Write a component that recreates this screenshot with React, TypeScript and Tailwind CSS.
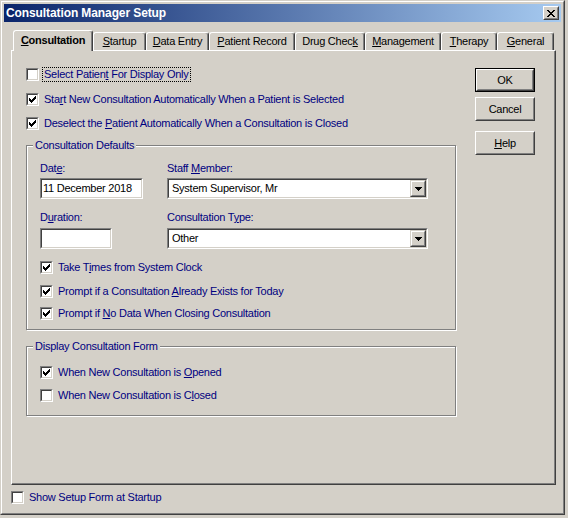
import React from "react";

const U = ({ children }: { children: React.ReactNode }) => (
  <span className="underline decoration-1 underline-offset-[1px]">{children}</span>
);

function Check({ checked }: { checked?: boolean }) {
  return (
    <span className="block w-[13px] h-[13px] shrink-0 border border-t-[#808080] border-l-[#808080] border-b-white border-r-white">
      <span className="block w-[11px] h-[11px] border border-t-[#404040] border-l-[#404040] border-b-[#d4d0c8] border-r-[#d4d0c8] bg-white">
        {checked && (
          <svg width="9" height="9" viewBox="0 0 9 9" shapeRendering="crispEdges" className="block">
            <path
              d="M1 3h1v3h-1zM2 4h1v3h-1zM3 5h1v3h-1zM4 4h1v3h-1zM5 3h1v3h-1zM6 2h1v3h-1zM7 1h1v3h-1z"
              fill="#000"
            />
          </svg>
        )}
      </span>
    </span>
  );
}

function CheckRow({
  checked,
  focus,
  children,
  className = "",
}: {
  checked?: boolean;
  focus?: boolean;
  children: React.ReactNode;
  className?: string;
}) {
  return (
    <div className={`flex items-center h-[13px] ${className}`}>
      <Check checked={checked} />
      <span
        className={`ml-[3px] px-[1px] h-[15px] leading-[13px] whitespace-nowrap border border-dotted text-[#000080] ${
          focus ? "border-black" : "border-transparent"
        }`}
      >
        {children}
      </span>
    </div>
  );
}

function Sunken({ className = "", children }: { className?: string; children?: React.ReactNode }) {
  return (
    <div className={`border border-t-[#808080] border-l-[#808080] border-b-white border-r-white ${className}`}>
      <div className="h-full w-full border border-t-[#404040] border-l-[#404040] border-b-[#d4d0c8] border-r-[#d4d0c8] bg-white flex items-center overflow-hidden">
        {children}
      </div>
    </div>
  );
}

function Raised({ className = "", children }: { className?: string; children?: React.ReactNode }) {
  return (
    <div className={`border border-t-[#d4d0c8] border-l-[#d4d0c8] border-r-[#404040] border-b-[#404040] ${className}`}>
      <div className="h-full w-full border border-t-white border-l-white border-r-[#808080] border-b-[#808080] bg-[#d4d0c8] flex items-center justify-center">
        {children}
      </div>
    </div>
  );
}

function Combo({ value, className = "" }: { value: string; className?: string }) {
  return (
    <Sunken className={`w-[261px] h-[21px] ${className}`}>
      <span className="flex-1 pl-[3px] leading-[13px] whitespace-nowrap">{value}</span>
      <Raised className="w-[16px] h-[17px] shrink-0">
        <svg width="7" height="4" viewBox="0 0 7 4" shapeRendering="crispEdges" className="block">
          <path d="M0 0h7v1h-7zM1 1h5v1h-5zM2 2h3v1h-3zM3 3h1v1h-1z" fill="#000" />
        </svg>
      </Raised>
    </Sunken>
  );
}

function Button({ children, def }: { children: React.ReactNode; def?: boolean }) {
  return (
    <div className={`w-[60px] h-[24px] ${def ? "border border-black" : ""}`}>
      <div className="w-full h-full border border-t-white border-l-white border-r-[#404040] border-b-[#404040]">
        <div className="w-full h-full border border-t-[#d4d0c8] border-l-[#d4d0c8] border-r-[#808080] border-b-[#808080] flex items-center justify-center leading-[13px]">
          {children}
        </div>
      </div>
    </div>
  );
}

function CloseBtn() {
  const rows: [number, number][] = [];
  for (let y = 0; y < 7; y++) {
    rows.push([y, y]);
    rows.push([6 - y, y]);
  }
  const d = rows.map(([x, y]) => `M${x} ${y}h2v1h-2z`).join("");
  return (
    <div className="w-[16px] h-[14px] border border-t-white border-l-white border-r-[#404040] border-b-[#404040]">
      <div className="w-full h-full border border-t-[#d4d0c8] border-l-[#d4d0c8] border-r-[#808080] border-b-[#808080] bg-[#d4d0c8] flex items-center justify-center">
        <svg width="8" height="7" viewBox="0 0 8 7" shapeRendering="crispEdges" className="block">
          <path d={d} fill="#000" />
        </svg>
      </div>
    </div>
  );
}

const tabs: { label: React.ReactNode; w: string; selected?: boolean }[] = [
  { label: <><U>C</U>onsultation</>, w: "w-[80px]", selected: true },
  { label: <><U>S</U>tartup</>, w: "w-[53px]" },
  { label: <><U>D</U>ata Entry</>, w: "w-[63px]" },
  { label: <><U>P</U>atient Record</>, w: "w-[86px]" },
  { label: <>Drug Chec<U>k</U></>, w: "w-[70px]" },
  { label: <><U>M</U>anagement</>, w: "w-[76px]" },
  { label: <><U>T</U>herapy</>, w: "w-[56px]" },
  { label: <><U>G</U>eneral</>, w: "w-[57px]" },
];

export default function App() {
  return (
    <div className="w-[568px] h-[518px] bg-[#d4d0c8] font-['Liberation_Sans',Arial,sans-serif] text-[11px] tracking-[-0.25px] text-black select-none">
      <div className="w-[565px] h-[515px] border border-t-[#d4d0c8] border-l-[#d4d0c8] border-r-[#404040] border-b-[#404040]">
        <div className="h-full w-full border border-t-white border-l-white border-r-[#808080] border-b-[#808080] p-[2px] flex flex-col">
          {/* Title bar */}
          <div className="h-[18px] shrink-0 flex items-center bg-[linear-gradient(to_right,#0a246a,#a6caf0)] pl-[2px] pr-[2px]">
            <span className="flex-1 text-white font-bold text-[12px] tracking-[-0.1px] leading-none whitespace-nowrap">
              Consultation Manager Setup
            </span>
            <CloseBtn />
          </div>

          {/* Tab control */}
          <div className="ml-[7px] mt-[8px] w-[545px]">
            <div className="relative z-10 flex items-end h-[20px] pl-[2px]">
              {tabs.map((t, i) => (
                <div
                  key={i}
                  className={`${t.w} shrink-0 flex items-center justify-center whitespace-nowrap leading-[13px] bg-[#d4d0c8] border-l border-t border-r border-l-white border-t-white border-r-[#404040] rounded-tl-[3px] rounded-tr-[3px] shadow-[inset_-1px_0_0_#808080] ${
                    t.selected ? "h-[21px] mb-[-1px] font-bold pb-[2px]" : "h-[18px]"
                  }`}
                >
                  {t.label}
                </div>
              ))}
            </div>
            <div className="h-[435px] border border-t-white border-l-white border-r-[#404040] border-b-[#404040] shadow-[inset_-1px_-1px_0_#808080] flex pt-[17px] pl-[14px]">
              {/* Left column */}
              <div className="w-[430px] flex flex-col">
                <CheckRow focus>
                  Select Patien<U>t</U> For Display Only
                </CheckRow>
                <CheckRow checked className="mt-[12px]">
                  Sta<U>r</U>t New Consultation Automatically When a Patient is Selected
                </CheckRow>
                <CheckRow checked className="mt-[11px]">
                  Deselect the <U>P</U>atient Automatically When a Consultation is Closed
                </CheckRow>

                <fieldset className="mt-[9px] w-[430px] border border-[#808080] shadow-[inset_1px_1px_0_#fff,1px_1px_0_#fff] pb-[9px]">
                  <legend className="ml-[6px] px-[2px] h-[13px] leading-[13px] text-[#000080] bg-[#d4d0c8]">
                    Consultation Defaults
                  </legend>
                  <div className="pl-[13px] pt-[10px]">
                    <div className="flex">
                      <div className="w-[103px] flex flex-col">
                        <div className="h-[13px] leading-[13px] text-[#000080] whitespace-nowrap">
                          Dat<U>e</U>:
                        </div>
                        <Sunken className="mt-[3px] w-[103px] h-[21px]">
                          <span className="pl-[1px] leading-[13px] whitespace-nowrap">11 December 2018</span>
                        </Sunken>
                        <div className="mt-[12px] h-[13px] leading-[13px] text-[#000080] whitespace-nowrap">
                          D<U>u</U>ration:
                        </div>
                        <Sunken className="mt-[4px] w-[72px] h-[21px]" />
                      </div>
                      <div className="ml-[24px] w-[261px] flex flex-col">
                        <div className="h-[13px] leading-[13px] text-[#000080] whitespace-nowrap">
                          Staff <U>M</U>ember:
                        </div>
                        <Combo className="mt-[3px]" value="System Supervisor, Mr" />
                        <div className="mt-[12px] h-[13px] leading-[13px] text-[#000080] whitespace-nowrap">
                          Consultation T<U>y</U>pe:
                        </div>
                        <Combo className="mt-[4px]" value="Other" />
                      </div>
                    </div>
                    <CheckRow checked className="mt-[12px]">
                      Take T<U>i</U>mes from System Clock
                    </CheckRow>
                    <CheckRow checked className="mt-[11px]">
                      Prompt if a Consultation <U>A</U>lready Exists for Today
                    </CheckRow>
                    <CheckRow checked className="mt-[9px]">
                      Prompt if <U>N</U>o Data When Closing Consultation
                    </CheckRow>
                  </div>
                </fieldset>

                <fieldset className="mt-[10px] w-[430px] border border-[#808080] shadow-[inset_1px_1px_0_#fff,1px_1px_0_#fff] pb-[13px]">
                  <legend className="ml-[6px] px-[2px] h-[13px] leading-[13px] text-[#000080] bg-[#d4d0c8]">
                    Display Consultation Form
                  </legend>
                  <div className="pl-[13px] pt-[13px]">
                    <CheckRow checked>
                      When New Consultation is <U>O</U>pened
                    </CheckRow>
                    <CheckRow className="mt-[10px]">
                      When New Consultation is C<U>l</U>osed
                    </CheckRow>
                  </div>
                </fieldset>
              </div>

              {/* Right column: buttons */}
              <div className="ml-[19px] flex flex-col">
                <Button def>OK</Button>
                <div className="mt-[5px]">
                  <Button>Cancel</Button>
                </div>
                <div className="mt-[10px]">
                  <Button>
                    <U>H</U>elp
                  </Button>
                </div>
              </div>
            </div>
          </div>

          {/* Bottom checkbox */}
          <div className="ml-[7px] mt-[6px]">
            <CheckRow>Show Setup Form at Startup</CheckRow>
          </div>
        </div>
      </div>
    </div>
  );
}
